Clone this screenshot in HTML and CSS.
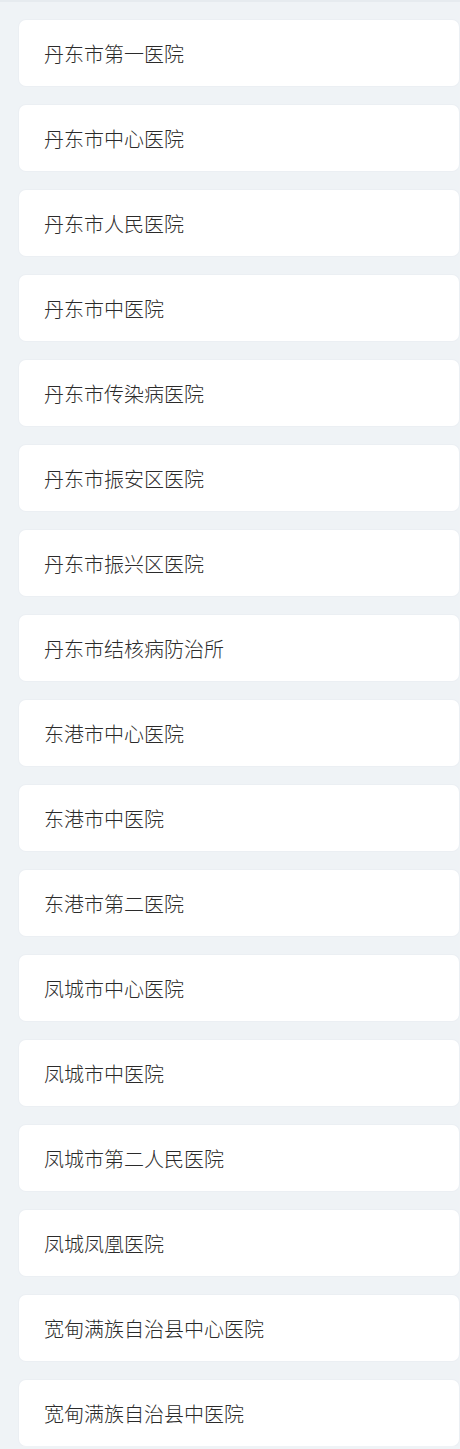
FILE: index.html
```html
<!DOCTYPE html>
<html lang="zh-CN">
<head>
<meta charset="utf-8">
<link rel="stylesheet" href="styles.css">
</head>
<body>
<div class="topbar"></div>
<ul class="list">
<li class="card">丹东市第一医院</li>
<li class="card">丹东市中心医院</li>
<li class="card">丹东市人民医院</li>
<li class="card">丹东市中医院</li>
<li class="card">丹东市传染病医院</li>
<li class="card">丹东市振安区医院</li>
<li class="card">丹东市振兴区医院</li>
<li class="card">丹东市结核病防治所</li>
<li class="card">东港市中心医院</li>
<li class="card">东港市中医院</li>
<li class="card">东港市第二医院</li>
<li class="card">凤城市中心医院</li>
<li class="card">凤城市中医院</li>
<li class="card">凤城市第二人民医院</li>
<li class="card">凤城凤凰医院</li>
<li class="card">宽甸满族自治县中心医院</li>
<li class="card">宽甸满族自治县中医院</li>
</ul>
</body>
</html>
```
FILE: styles.css
```css
html, body {
  margin: 0;
  padding: 0;
  background: #eff3f6;
}
body {
  font-family: "Noto Sans CJK SC", "Noto Sans", sans-serif;
  color: #2b2b2b;
}
.topbar {
  height: 2px;
  background: #e6ebef;
}
.list {
  list-style: none;
  margin: 0;
  padding: 18px 1px 0 19px;
  display: flex;
  flex-direction: column;
  gap: 19px;
}
.card {
  height: 66px;
  box-sizing: border-box;
  background: #fff;
  border-radius: 7px;
  box-shadow: 0 0 0 1px #ebeff3;
  display: flex;
  align-items: center;
  padding: 2px 0 0 25px;
  font-size: 20px;
  font-weight: 300;
  line-height: 1;
}
```
